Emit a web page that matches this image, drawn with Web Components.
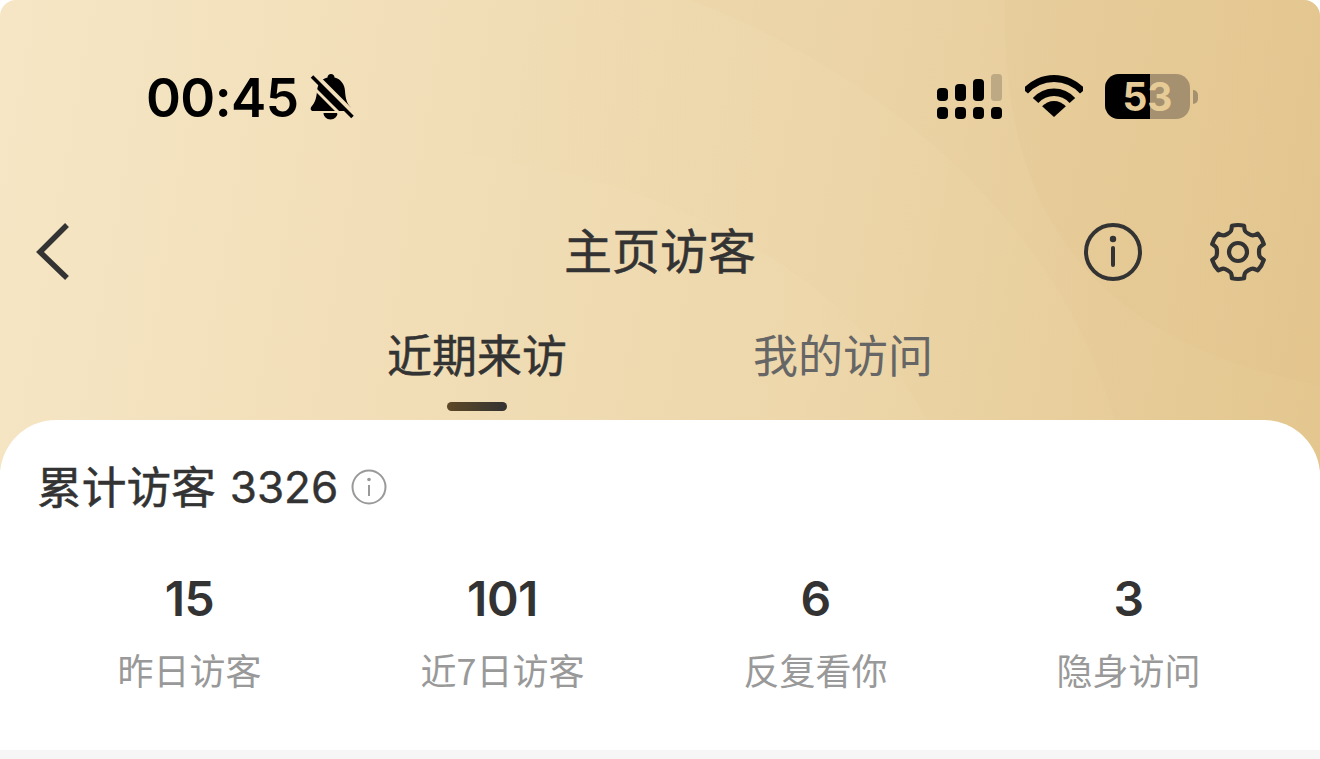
<!DOCTYPE html>
<html><head><meta charset="utf-8">
<style>
html,body{margin:0;padding:0;background:#fff;width:1320px;height:759px;overflow:hidden}
body{font-family:"Inter","Noto Sans CJK SC",sans-serif}
</style></head><body>
<visitor-page></visitor-page>
<script>
function def(name,html){customElements.define(name,class extends HTMLElement{constructor(){super();this.attachShadow({mode:'open'}).innerHTML=html}})}
function gear(){
  const P=(r,a)=>{const t=a*Math.PI/180;return (30+r*Math.cos(t)).toFixed(2)+' '+(30+r*Math.sin(t)).toFixed(2)};
  const R=27,V=17.5,W=13;let d='';
  for(let i=0;i<6;i++){const a=-90+i*60;
    d+=(i?'L':'M')+P(R,a-W)+'A'+R+' '+R+' 0 0 1 '+P(R,a+W);
    d+='C'+P(R-5,a+W+4)+' '+P(V+4,a+18)+' '+P(V+3.500,a+30)+'C'+P(V+4,a+42)+' '+P(R-5,a+60-W-4)+' '+P(R,a+60-W);
  }
  return d+'Z';
}
def('status-bar',`<style>
:host{display:flex;justify-content:space-between;align-items:center;height:44px;padding:75px 122px 0 146px;color:#000}
.l,.r{display:flex;align-items:center}
.t{font:600 53px/44px Inter,sans-serif;letter-spacing:-.6px;margin-top:2px}
svg{display:block}
.batt{position:relative;width:85px;height:45px;margin-left:22px;margin-top:-1px;border-radius:14px;overflow:hidden;background:#a59170;font:700 39px/45px Inter,sans-serif;color:#e6cb96;text-align:center}
.batt i{position:absolute;left:0;top:0;bottom:0;width:45px;background:#000}
.batt span{position:relative}
.nub{width:5px;height:14px;margin-left:3px;margin-top:-1px;background:#a59170;border-radius:0 5px 5px 0}
</style>
<div class="l"><span class="t">00:45</span>
<svg style="margin-left:12px" width="44" height="46" viewBox="0 0 44 46"><defs><mask id="m"><rect width="44" height="46" fill="#fff"/><path d="M4 0L44 40" stroke="#000" stroke-width="5" fill="none"/><path d="M-2 8L34 44" stroke="#000" stroke-width="3" fill="none"/></mask></defs><g mask="url(#m)"><path d="M21 0c2 0 3.500 1.500 3.500 3.500C31 5 34.500 10.500 35 17c.5 8 2 12 5 15.500 1.500 2 1 4.500-1.500 4.500H3C.5 37 0 34.500 1.500 32.500 5 28.500 6.500 24 7 17c.5-6.500 4-12 10.500-13.500C17.500 1.500 19 0 21 0z" fill="#000"/><path d="M13.500 39h14c0 3.500-3 6.500-7 6.500s-7-3-7-6.500z" fill="#000"/></g><path d="M2 2.500L42.500 43" stroke="#000" stroke-width="3.500" fill="none"/></svg></div>
<div class="r">
<svg width="66" height="46" viewBox="0 0 66 46" fill="#000"><rect x="0" y="14" width="11" height="13" rx="4"/><rect x="18" y="10" width="11" height="17" rx="4"/><rect x="36" y="5" width="11" height="22" rx="4"/><rect x="54" y="0" width="11" height="27" rx="3.500" fill="#bda984"/><rect x="0" y="33" width="11" height="12" rx="4"/><rect x="18" y="33" width="11" height="12" rx="4"/><rect x="36" y="33" width="11" height="12" rx="4"/><rect x="54" y="33" width="11" height="12" rx="4"/></svg>
<svg style="margin-left:22px" width="58" height="44" viewBox="0 0 58 44" fill="#000"><path d="M-2.200 13.900A42 42 0 0 1 60.200 13.900L55 18.600A35 35 0 0 0 3 18.600Z"/><path d="M7.800 22.900A28.500 28.500 0 0 1 50.200 22.900L44.600 27.900A21 21 0 0 0 13.400 27.900Z"/><path d="M17.100 31.300A16 16 0 0 1 40.900 31.300L29 42Z"/></svg>
<div class="batt"><i></i><span>53</span></div>
<div class="nub"></div>
</div>`);
def('nav-bar',`<style>
:host{display:block;position:relative;height:72px;margin-top:95px;color:#333}
.title{display:block;text-align:center;font:400 48px/68px "Noto Sans CJK SC",sans-serif;-webkit-text-stroke:.5px #333}
svg{position:absolute;display:block;top:8px}
</style>
<svg style="left:30px" width="44" height="60" viewBox="0 0 44 60"><path d="M37 3L10 30L37 56" fill="none" stroke="#333" stroke-width="5.500"/></svg>
<span class="title">主页访客</span>
<svg style="left:1083px" width="60" height="60" viewBox="0 0 60 60" fill="none" stroke="#333" stroke-width="4"><circle cx="30" cy="30" r="27"/><circle cx="30" cy="17" r="3.200" fill="#333" stroke="none"/><path d="M30 26v17" stroke-linecap="round" stroke-width="4"/></svg>
<svg style="left:1208px" width="60" height="60" viewBox="0 0 60 60" fill="none" stroke="#333" stroke-width="4.200" stroke-linejoin="round"><path d="${gear()}"/><circle cx="30" cy="30" r="9"/></svg>`);
def('tab-bar',`<style>
:host{display:flex;position:relative;height:52px;margin-top:42px;padding-left:387px;font:400 45px/52px "Noto Sans CJK SC",sans-serif}
.b{color:#333;-webkit-text-stroke:.5px #333}.g{color:#666;margin-left:186px}
i{position:absolute;left:447px;top:74px;width:60px;height:9px;border-radius:5px;background:linear-gradient(90deg,#5e4826,#333)}
</style><span class="b">近期来访</span><span class="g">我的访问</span><i></i>`);
def('stat-item',`<style>
:host{display:block;text-align:center}
.n{font:600 48px/54px Inter,sans-serif;letter-spacing:-.5px;color:#333}
.l{font:400 36px/50px "Noto Sans CJK SC",sans-serif;color:#999;margin-top:18px}
</style><div class="n"><slot name="n"></slot></div><div class="l"><slot name="l"></slot></div>`);
def('stats-card',`<style>
:host{display:block;position:relative;margin-top:-50px;height:330px;background:#fff;border-radius:56px 56px 0 0}
.h{display:flex;align-items:center;padding:38px 0 0 37px;height:54px;color:#333}
.c{font:400 44.700px/54px "Noto Sans CJK SC",sans-serif;-webkit-text-stroke:.5px #333}
.v{font:400 44px/54px Inter,sans-serif;-webkit-text-stroke:.4px #333;margin-left:14px;margin-top:4px}
svg{margin-left:13px;margin-top:4px}
.g{display:grid;grid-template-columns:repeat(4,313px);padding:60px 0 0 33px}
</style>
<div class="h"><span class="c">累计访客</span><span class="v">3326</span>
<svg width="36" height="36" viewBox="0 0 36 36" fill="none" stroke="#999" stroke-width="2"><circle cx="18" cy="18" r="16.500"/><circle cx="18" cy="10.500" r="1.800" fill="#999" stroke="none"/><path d="M18 16v11"/></svg></div>
<div class="g"><slot></slot></div>`);
def('visitor-page',`<style>
:host{display:block;width:1320px;height:759px;background:linear-gradient(#fff 750px,#f6f6f6 750px);overflow:hidden}
.hero{position:relative;height:470px;border-radius:16px 16px 0 0;overflow:hidden;background:linear-gradient(100deg,#f6e6c5 0%,#edd7ab 62%,#e5c890 100%)}
.deco{position:absolute;left:0;top:0}
.content{position:relative}
</style>
<div class="hero">
<svg class="deco" width="1320" height="470" viewBox="0 0 1320 470">
<defs><linearGradient id="f" gradientUnits="userSpaceOnUse" x1="430" y1="0" x2="680" y2="0"><stop offset="0" stop-color="#dcbb80" stop-opacity="0"/><stop offset="1" stop-color="#dcbb80" stop-opacity=".05"/></linearGradient></defs>
<path d="M430 150C640 170 870 260 950 470H1320V0H430Z" fill="url(#f)"/>
<path d="M690 0C880 70 1090 240 1125 470H1320V0Z" fill="#dcbb80" fill-opacity=".06"/>
<path d="M1005 0C1000 200 1080 340 1320 385V0Z" fill="#dcbb80" fill-opacity=".12"/>
</svg>
<div class="content"><status-bar></status-bar><nav-bar></nav-bar><tab-bar></tab-bar></div></div>
<stats-card>
<stat-item><span slot="n">15</span><span slot="l">昨日访客</span></stat-item>
<stat-item><span slot="n">101</span><span slot="l">近7日访客</span></stat-item>
<stat-item><span slot="n">6</span><span slot="l">反复看你</span></stat-item>
<stat-item><span slot="n">3</span><span slot="l">隐身访问</span></stat-item>
</stats-card>`);
</script>
</body></html>
